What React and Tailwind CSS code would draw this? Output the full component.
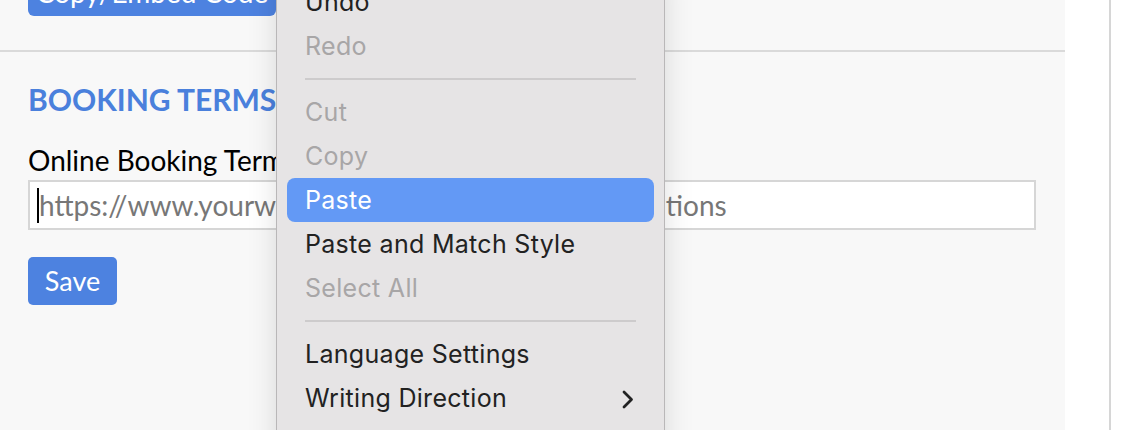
const MenuItem = ({ label, disabled, active, submenu }) => (
  <div className="h-[44px] px-[10px]">
    <div
      className={
        "h-full rounded-[8px] pl-[18px] pr-[20px] pt-[2px] flex items-center justify-between " +
        (active ? "bg-[#6399f5] text-white" : disabled ? "text-[#a8a6a7]" : "text-[#222222]")
      }
    >
      <span>{label}</span>
      {submenu && (
        <svg width="12" height="19" viewBox="0 0 12 19" fill="none">
          <path d="M2 2l7.5 7.5L2 17" stroke="#222" strokeWidth="2.8" strokeLinecap="round" strokeLinejoin="round" />
        </svg>
      )}
    </div>
  </div>
);

const Separator = () => (
  <div className="h-[22px] px-[28px] flex items-center">
    <div className="w-full h-[2px] bg-[#cdcbcc]"></div>
  </div>
);

const ContextMenu = () => (
  <div
    className="absolute left-[276px] top-[-31px] w-[389px] h-[520px] py-[10px] bg-[#e6e4e5] border border-[#b9b7b8] rounded-[12px] shadow-[0_0_30px_rgba(0,0,0,0.13)] text-[25px] tracking-[0.3px]"
    style={{ fontFamily: "Inter, 'Noto Sans', sans-serif" }}
  >
    <MenuItem label="Undo" />
    <MenuItem label="Redo" disabled />
    <Separator />
    <MenuItem label="Cut" disabled />
    <MenuItem label="Copy" disabled />
    <MenuItem label="Paste" active />
    <MenuItem label="Paste and Match Style" />
    <MenuItem label="Select All" disabled />
    <Separator />
    <MenuItem label="Language Settings" />
    <MenuItem label="Writing Direction" submenu />
  </div>
);

export default function App() {
  return (
    <div className="relative w-[1136px] h-[430px] overflow-hidden bg-white flex" style={{ fontFamily: "Lato, 'Open Sans', sans-serif" }}>
      {/* settings panel */}
      <div className="w-[1065px] h-full bg-[#f8f8f8]">
        <div className="px-[28px]">
          <button className="block -mt-[32px] h-[48px] w-[248px] rounded-[6px] bg-[#4d82e0] text-white text-[28px]">
            Copy/Embed Code
          </button>
        </div>
        <div className="mt-[34px] h-[2px] bg-[#dadada]"></div>

        <div className="px-[28px] pt-[29px]">
          <h2 className="text-[30px] leading-[36px] font-bold text-[#4a80dc]">BOOKING TERMS</h2>
          <label className="block mt-[26px] text-[28px] leading-[34px] text-black">Online Booking Terms &amp; Conditions URL</label>
          <div className="mt-[3px] w-[1008px] h-[50px] bg-white border-2 border-[#d6d6d6] flex items-center pl-[7px]">
            <span className="w-[2px] h-[35px] bg-black"></span>
            <span className="text-[28px] text-[#777777]">https://www.yourwebsite.com/en/terms-and-conditions</span>
          </div>
          <button className="block mt-[27px] h-[48px] w-[89px] rounded-[5px] bg-[#4d82e0] text-white text-[27px]">
            Save
          </button>
        </div>
      </div>

      {/* right gutter */}
      <div className="w-[44px] h-full bg-white"></div>
      <div className="w-[2px] h-full bg-[#d6d6d6]"></div>
      <div className="flex-1 h-full bg-white"></div>

      <ContextMenu />
    </div>
  );
}
